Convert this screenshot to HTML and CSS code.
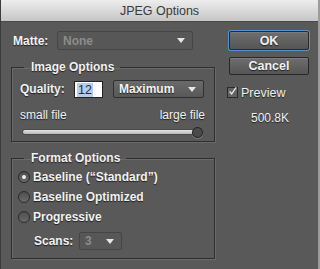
FILE: index.html
```html
<!DOCTYPE html>
<html lang="en">
<head>
  <meta charset="UTF-8">
  <meta name="viewport" content="width=device-width, initial-scale=1.0">
  <title>JPEG Options</title>
  <link rel="stylesheet" href="styles.css">
</head>

<body>
  <div class="window">
    <div class="titlebar">JPEG Options</div>

    <div class="dialog">
      <div class="left">

        <div class="matte-row">
          <label class="label">Matte:</label>
          <div class="select disabled matte">
            <span>None</span>
            <span class="arrow"></span>
          </div>
        </div>

        <fieldset class="group image-group">
          <legend>Image Options</legend>

          <div class="quality-row">
            <label class="label">Quality:</label>
            <div class="text-input"><span class="selected">12</span></div>
            <div class="select quality">
              <span>Maximum</span>
              <span class="arrow"></span>
            </div>
          </div>

          <div class="size-row">
            <span>small file</span>
            <span>large file</span>
          </div>

          <div class="slider">
            <div class="track"></div>
            <div class="knob"></div>
          </div>
        </fieldset>

        <fieldset class="group format-group">
          <legend>Format Options</legend>

          <div class="radio-row">
            <span class="radio checked"></span>
            <span>Baseline (“Standard”)</span>
          </div>
          <div class="radio-row">
            <span class="radio"></span>
            <span>Baseline Optimized</span>
          </div>
          <div class="radio-row">
            <span class="radio"></span>
            <span>Progressive</span>
          </div>

          <div class="scans-row">
            <label class="label">Scans:</label>
            <div class="select disabled scans">
              <span>3</span>
              <span class="arrow"></span>
            </div>
          </div>
        </fieldset>

      </div>

      <div class="right">
        <button class="btn default">OK</button>
        <button class="btn cancel">Cancel</button>

        <div class="preview">
          <span class="checkbox">
            <svg width="11" height="11" viewBox="0 0 11 11">
              <path d="M2 5.5 L4.5 8.5 L10 0.5" fill="none" stroke="#e8e8e8" stroke-width="1.6"/>
            </svg>
          </span>
          <span>Preview</span>
        </div>

        <div class="filesize">500.8K</div>
      </div>
    </div>
  </div>
</body>
</html>
```

FILE: styles.css
```css
* {
  box-sizing: border-box;
  margin: 0;
  padding: 0;
}

body {
  width: 320px;
  height: 269px;
  overflow: hidden;
  font-family: 'Liberation Sans', Arial, sans-serif;
  font-size: 12px;
  background: #595959;
}

.window {
  height: 269px;
  background: #595959;
  border-right: 2px solid #9c9c9c;
  border-left: 1px solid #3c3c3c;
}

.titlebar {
  height: 22px;
  line-height: 22px;
  text-align: center;
  font-size: 12.5px;
  color: #3a3a3a;
  background: linear-gradient(#ededed, #c6c6c6);
  border-bottom: 1px solid #4a4a4a;
}

.dialog {
  display: flex;
}

.left {
  width: 214px;
  padding-left: 10px;
}

.right {
  width: 80px;
  margin-left: 14px;
  display: flex;
  flex-direction: column;
}

.label,
.group legend,
.size-row,
.radio-row,
.preview,
.filesize,
.btn {
  color: #f2f2f2;
  font-weight: bold;
  text-shadow: 0 1px 1px #1e1e1e;
}

/* selects */

.select {
  height: 19px;
  display: flex;
  align-items: center;
  justify-content: space-between;
  padding: 0 7px 0 5px;
  border: 1px solid #303030;
  border-radius: 2px;
  background: linear-gradient(#6a6a6a, #585858);
  color: #f2f2f2;
  font-weight: bold;
  text-shadow: 0 1px 1px #1e1e1e;
}

.select.disabled {
  background: #575757;
  border-color: #454545;
  color: #8c8c8c;
  text-shadow: none;
}

.arrow {
  width: 0;
  height: 0;
  border-left: 4px solid transparent;
  border-right: 4px solid transparent;
  border-top: 5px solid #e6e6e6;
}

.matte-row {
  display: flex;
  align-items: center;
  margin-top: 9px;
  height: 19px;
}

.matte-row .label {
  width: 46px;
  padding-left: 2px;
}

.matte {
  width: 136px;
}

/* groups */

.group {
  width: 204px;
  border: 1px solid #2e2e2e;
  box-shadow: inset 1px 1px 0 #6a6a6a, 1px 1px 0 #6a6a6a;
  padding: 0 9px 0 8px;
}

.group legend {
  margin-left: 4px;
  padding: 0 6px 0 7px;
  line-height: 14px;
}

.image-group {
  margin-top: 10px;
  height: 82px;
}

.quality-row {
  display: flex;
  align-items: center;
  margin-top: 6px;
  height: 18px;
}

.quality-row .label {
  width: 54px;
}

.text-input {
  width: 29px;
  height: 17px;
  background: #fff;
  border: 1px solid #222;
  padding: 1px 0 0 2px;
  color: #2a2a2a;
  font-size: 12.5px;
  line-height: 14px;
}

.selected {
  background: #b4cdee;
  padding: 0 1px;
}

.quality {
  width: 91px;
  margin-left: 10px;
  height: 18px;
}

.size-row {
  display: flex;
  justify-content: space-between;
  margin-top: 11px;
  line-height: 13px;
  font-weight: normal;
}

.slider {
  display: flex;
  align-items: center;
  margin: 4px 2px 0 3px;
  height: 12px;
}

.track {
  flex: 1;
  height: 4px;
  border-radius: 2px;
  background: linear-gradient(#e4e4e4, #b8b8b8);
  box-shadow: 0 0 0 1px #4a4a4a;
}

.knob {
  width: 11px;
  height: 11px;
  margin-left: -4px;
  border-radius: 50%;
  background: #4b4b4b;
  border: 1px solid #202020;
  box-shadow: 0 1px 0 #777;
}

.format-group {
  margin-top: 9px;
  height: 108px;
  padding-left: 6px;
}

.format-group legend {
  margin-left: 6px;
}

.radio-row {
  display: flex;
  align-items: center;
  gap: 3px;
  height: 20px;
  margin-top: 2px;
}

.radio-row + .radio-row {
  margin-top: 0;
}

.radio {
  width: 12px;
  height: 12px;
  border-radius: 50%;
  border: 1px solid #2a2a2a;
  background: linear-gradient(#4e4e4e, #6a6a6a);
  display: flex;
  align-items: center;
  justify-content: center;
}

.radio.checked::after {
  content: '';
  width: 4px;
  height: 4px;
  border-radius: 50%;
  background: #f0f0f0;
}

.scans-row {
  display: flex;
  align-items: center;
  margin-top: 5px;
  padding-left: 16px;
  height: 18px;
}

.scans-row .label {
  width: 45px;
}

.scans {
  width: 43px;
  height: 18px;
}

/* right column */

.btn {
  width: 80px;
  height: 19px;
  font-family: inherit;
  font-size: 12.5px;
  border: 1px solid #272727;
  border-radius: 2px;
  background: linear-gradient(#6e6e6e, #555);
  box-shadow: inset 0 1px 0 #7c7c7c;
}

.btn.default {
  margin-top: 9px;
  box-shadow: 0 0 0 1px #5b8fd4, inset 0 1px 0 #7c7c7c;
  border-color: #2a2a2a;
}

.btn.cancel {
  margin-top: 7px;
  height: 18px;
}

.preview {
  display: flex;
  align-items: center;
  gap: 3px;
  margin-top: 11px;
  margin-left: -2px;
  height: 13px;
  font-weight: normal;
  font-size: 12.5px;
}

.checkbox {
  width: 11px;
  height: 11px;
  border: 1px solid #2a2a2a;
  background: #626262;
  display: flex;
}

.checkbox svg {
  margin: -2px 0 0 0;
}

.filesize {
  margin-top: 12px;
  text-align: center;
  font-weight: normal;
  padding-left: 2px;
}
```
